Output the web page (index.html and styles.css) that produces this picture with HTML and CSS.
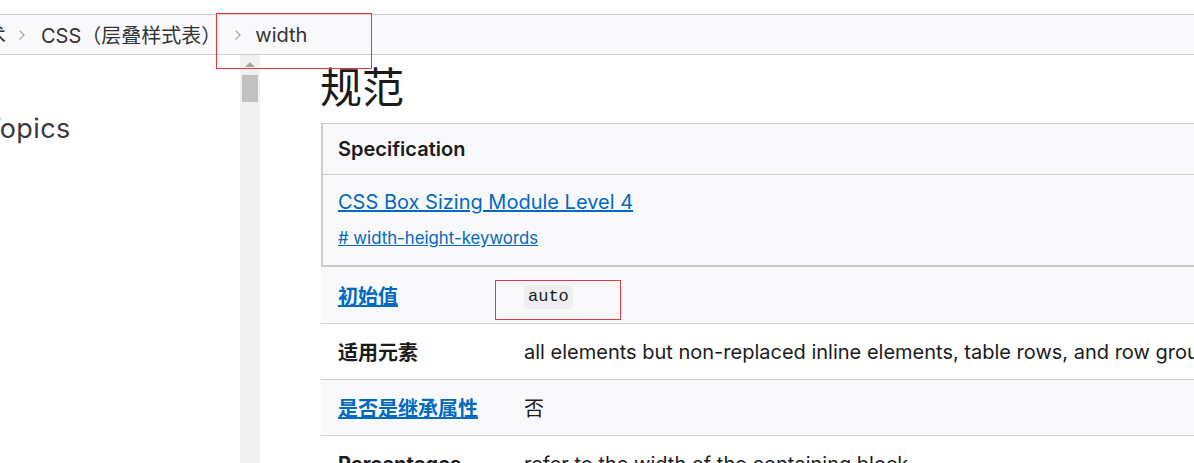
FILE: index.html
```html
<!DOCTYPE html>
<html lang="zh-CN">
<head>
<meta charset="utf-8">
<title>width - CSS（层叠样式表）</title>
<link rel="stylesheet" href="styles.css">
</head>
<body>
<div class="top-space"></div>
<nav class="breadcrumb">
  <span class="crumb crumb-cut">开发技术</span>
  <svg class="sep" viewBox="0 0 8 12" width="8" height="12"><path d="M1.5 1.5 L6 6 L1.5 10.5" fill="none" stroke="#a8a8a8" stroke-width="1.3"/></svg>
  <span class="crumb">CSS（层叠样式表）</span>
  <svg class="sep sep2" viewBox="0 0 8 12" width="8" height="12"><path d="M1.5 1.5 L6 6 L1.5 10.5" fill="none" stroke="#a8a8a8" stroke-width="1.3"/></svg>
  <span class="crumb">width</span>
</nav>
<div class="main">
  <aside class="sidebar">
    <p class="side-title">Topics</p>
  </aside>
  <div class="scrollbar">
    <svg class="sb-arrow" viewBox="0 0 10 5" width="10" height="5"><path d="M0 5 L5 0 L10 5 Z" fill="#a3a3a3"/></svg>
    <div class="sb-thumb"></div>
  </div>
  <main class="content">
    <h1 class="title">规范</h1>
    <div class="spec">
      <div class="spec-head">Specification</div>
      <div class="spec-body">
        <a class="spec-link" href="#">CSS Box Sizing Module Level 4</a>
        <a class="spec-hash" href="#"># width-height-keywords</a>
      </div>
    </div>
    <div class="props">
      <div class="prop-row shaded first">
        <div class="prop-label"><a class="plink" href="#">初始值</a></div>
        <div class="prop-value"><code class="code">auto</code></div>
      </div>
      <div class="prop-row">
        <div class="prop-label">适用元素</div>
        <div class="prop-value">all elements but non-replaced inline elements, table rows, and row groups</div>
      </div>
      <div class="prop-row shaded">
        <div class="prop-label"><a class="plink" href="#">是否是继承属性</a></div>
        <div class="prop-value">否</div>
      </div>
      <div class="prop-row">
        <div class="prop-label">Percentages</div>
        <div class="prop-value">refer to the width of the containing block</div>
      </div>
    </div>
  </main>
</div>
<div class="mark mark-crumb"></div>
<div class="mark mark-auto"></div>
</body>
</html>
```
FILE: styles.css
```css
html, body {
  margin: 0;
  padding: 0;
}
body {
  width: 1194px;
  height: 463px;
  overflow: hidden;
  position: relative;
  background: #ffffff;
  color: #1b1b1b;
  font-family: Inter, "Noto Sans CJK SC", sans-serif;
}
.top-space {
  height: 14px;
}
.breadcrumb {
  height: 39px;
  border-top: 1px solid #cdcdcd;
  border-bottom: 1px solid #cdcdcd;
  background: #f9f9fb;
  display: flex;
  align-items: center;
  white-space: nowrap;
  font-size: 20px;
  color: #333;
}
.crumb-cut {
  margin-left: -74px;
}
.sep {
  flex-shrink: 0;
  margin: 0 15px 0 12px;
}
.sep2 {
  margin-left: 13px;
  margin-right: 13px;
}
.main {
  display: flex;
  align-items: stretch;
  height: 408px;
}
.sidebar {
  width: 240px;
  flex-shrink: 0;
  overflow: hidden;
}
.side-title {
  margin: 56px 0 0 -16px;
  font-size: 27px;
  line-height: 36px;
  letter-spacing: 0.4px;
  color: #3a3a3a;
  white-space: nowrap;
}
.scrollbar {
  width: 20px;
  flex-shrink: 0;
  background: #f1f1f1;
  display: flex;
  flex-direction: column;
  align-items: center;
}
.sb-arrow {
  margin-top: 7px;
}
.sb-thumb {
  width: 16px;
  height: 27px;
  margin-top: 8px;
  background: #c1c1c1;
}
.content {
  width: 1000px;
  flex-shrink: 0;
  margin-left: 60px;
}
.title {
  margin: 9px 0 11px;
  font-size: 42px;
  line-height: 48px;
  font-weight: 400;
}
.spec {
  margin-left: 1px;
  border-top: 1px solid #cdcdcd;
  border-left: 2px solid #cdcdcd;
  border-bottom: 2px solid #c8c8c8;
  background: #f9f9fb;
  font-size: 20px;
}
.spec-head {
  padding: 10px 15px;
  line-height: 30px;
  font-weight: 600;
  border-bottom: 1px solid #cdcdcd;
}
.spec-body {
  padding: 12px 15px 15px;
  display: flex;
  flex-direction: column;
  align-items: flex-start;
  gap: 9px;
}
.spec-link {
  color: #0069c2;
  line-height: 30px;
}
.spec-hash {
  color: #0069c2;
  font-size: 16.8px;
  line-height: 24px;
}
.props {
  margin-left: 1px;
  font-size: 20px;
}
.prop-row {
  display: grid;
  grid-template-columns: 186px 1fr;
  align-items: center;
  height: 55px;
  border-bottom: 1px solid #cdcdcd;
  white-space: nowrap;
}
.prop-row.first {
  height: 56px;
}
.prop-row.shaded {
  background: #f9f9fb;
}
.prop-label {
  padding: 0 17px;
  font-weight: 700;
}
.plink {
  color: #0069c2;
}
.prop-value {
  padding: 0 17px;
}
.code {
  display: inline-block;
  font-family: "Liberation Mono", "DejaVu Sans Mono", monospace;
  font-size: 17px;
  line-height: 24px;
  padding: 0 4px;
  border-radius: 4px;
  background: #eeeef0;
  color: #1b1b1b;
}
.mark {
  position: absolute;
  border: 1px solid #e8383d;
  box-sizing: border-box;
  pointer-events: none;
}
.mark-crumb {
  left: 216px;
  top: 13px;
  width: 156px;
  height: 56px;
}
.mark-auto {
  left: 495px;
  top: 280px;
  width: 126px;
  height: 40px;
}
```
